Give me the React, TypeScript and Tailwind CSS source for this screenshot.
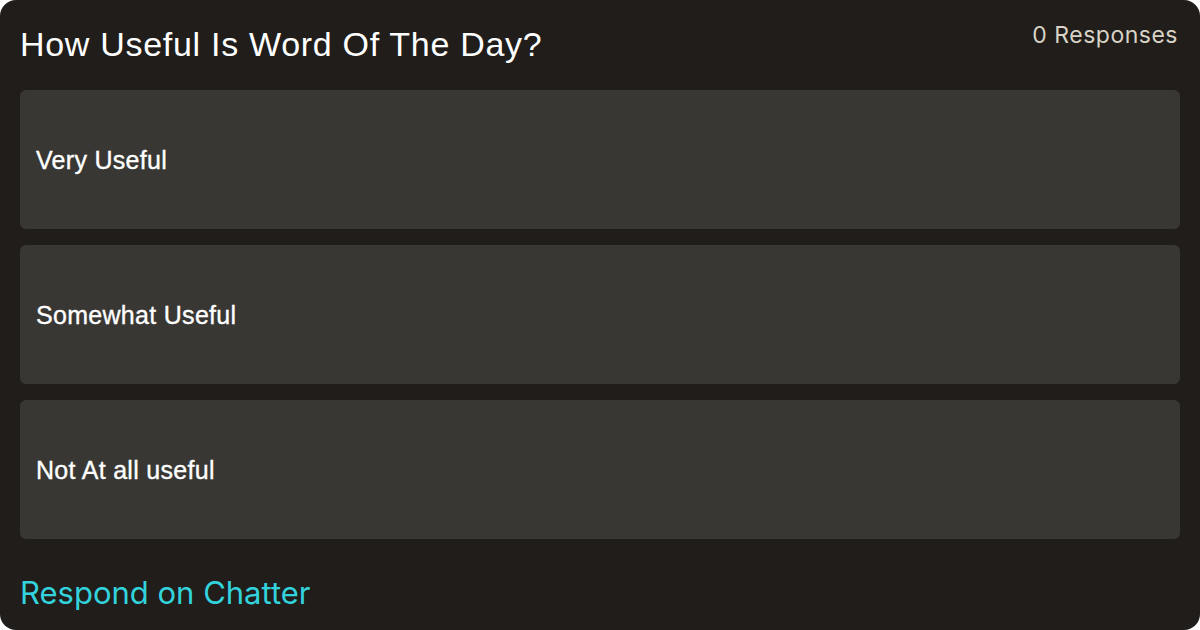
import React from "react";

const options = ["Very Useful", "Somewhat Useful", "Not At all useful"];

export default function App() {
  return (
    <div className="w-[1200px] h-[630px] bg-white">
      <div className="w-full h-full bg-[#201d1a] rounded-[16px] px-5 pt-[18px] pb-5 flex flex-col">
        <div className="flex items-start justify-between h-[54px]">
          <h1 className="text-white text-[34px] leading-[52px] font-['Liberation_Sans',Arial,sans-serif] tracking-[0.7px]">
            How Useful Is Word Of The Day?
          </h1>
          <span className="text-[#d8d3c6] text-[23px] leading-[36px] font-['Inter',sans-serif] tracking-[0.5px] mt-[-1px] mr-[2px]">
            0 Responses
          </span>
        </div>
        <div className="flex flex-col gap-4 mt-[18px]">
          {options.map((o) => (
            <div
              key={o}
              className="h-[139px] bg-[#383734] rounded-[6px] px-4 flex items-center"
            >
              <span className="text-white text-[25px] tracking-[0.3px] font-['Liberation_Sans',Arial,sans-serif] [-webkit-text-stroke:0.35px_white] relative top-[1px]">
                {o}
              </span>
            </div>
          ))}
        </div>
        <div className="mt-auto">
          <span className="text-[#33d3de] text-[31px] leading-[40px] font-['Inter',sans-serif] relative top-[3px]">
            Respond on Chatter
          </span>
        </div>
      </div>
    </div>
  );
}
